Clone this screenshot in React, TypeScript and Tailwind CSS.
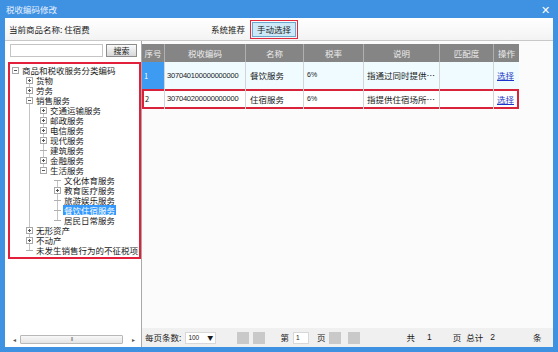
type Node = { label: string; level: number; icon: "plus" | "minus" | "leaf" | "none"; selected?: boolean };

const tree: Node[] = [
  { label: "商品和税收服务分类编码", level: 0, icon: "minus" },
  { label: "货物", level: 1, icon: "plus" },
  { label: "劳务", level: 1, icon: "plus" },
  { label: "销售服务", level: 1, icon: "minus" },
  { label: "交通运输服务", level: 2, icon: "plus" },
  { label: "邮政服务", level: 2, icon: "plus" },
  { label: "电信服务", level: 2, icon: "plus" },
  { label: "现代服务", level: 2, icon: "plus" },
  { label: "建筑服务", level: 2, icon: "leaf" },
  { label: "金融服务", level: 2, icon: "plus" },
  { label: "生活服务", level: 2, icon: "minus" },
  { label: "文化体育服务", level: 3, icon: "leaf" },
  { label: "教育医疗服务", level: 3, icon: "plus" },
  { label: "旅游娱乐服务", level: 3, icon: "leaf" },
  { label: "餐饮住宿服务", level: 3, icon: "leaf", selected: true },
  { label: "居民日常服务", level: 3, icon: "leaf" },
  { label: "无形资产", level: 1, icon: "plus" },
  { label: "不动产", level: 1, icon: "plus" },
  { label: "未发生销售行为的不征税项目", level: 1, icon: "leaf" },
];

// tree guide lines: [level, first row, last row]
const guides: [number, number, number][] = [
  [1, 1, 18],
  [2, 4, 10],
  [3, 11, 15],
];

const cols = [
  { title: "序号", w: "w-[23px]" },
  { title: "税收编码", w: "w-[81px]" },
  { title: "名称", w: "w-[58px]" },
  { title: "税率", w: "w-[60px]" },
  { title: "说明", w: "w-[76px]" },
  { title: "匹配度", w: "w-[54px]" },
  { title: "操作", w: "w-[25px]" },
];

const rows = [
  { no: "1", code: "307040100000000000", name: "餐饮服务", rate: "6%", desc: "指通过同时提供…" },
  { no: "2", code: "307040200000000000", name: "住宿服务", rate: "6%", desc: "指提供住宿场所…" },
];

function Expander({ icon }: { icon: Node["icon"] }) {
  if (icon === "leaf") {
    return (
      <span className="flex h-[7px] w-[7px] shrink-0 items-center">
        <span className="h-px w-[7px] bg-[#b0b0b0]" />
      </span>
    );
  }
  if (icon === "none") return <span className="w-[7px] shrink-0" />;
  return (
    <span className="relative z-10 flex h-[7px] w-[7px] shrink-0 items-center justify-center border border-[#a8a8a8] bg-white">
      <span className="absolute h-px w-[3px] bg-[#555]" />
      {icon === "plus" && <span className="absolute h-[3px] w-px bg-[#555]" />}
    </span>
  );
}

export default function App() {
  return (
    <div
      className="flex h-[352px] w-[558px] flex-col overflow-hidden bg-[#3f91e2] text-[#1a1a1a]"
      style={{ fontFamily: '"Noto Sans CJK SC", "Liberation Sans", sans-serif' }}
    >
      {/* title bar */}
      <div className="flex h-[18px] shrink-0 items-center justify-between pl-[6px] pr-[8px] text-[8.5px] text-[#e8f2ff]">
        <span>税收编码修改</span>
        <span className="text-[11px] leading-none text-white">✕</span>
      </div>

      <div className="mx-[5px] mb-[5px] flex min-h-0 flex-1 flex-col bg-white">
        {/* product row */}
        <div className="flex h-[23px] shrink-0 items-center border-b border-[#c8c8c8] bg-gradient-to-b from-white to-[#f3f3f3] pl-[4px] text-[8.5px]">
          <span className="w-[202px]">当前商品名称: 住宿费</span>
          <span>系统推荐</span>
          <span className="ml-[5px] border border-[#e0283f] p-px">
            <span className="block border border-[#6aa8cc] bg-[#cde9f7] px-[4px] py-px leading-[11px]">手动选择</span>
          </span>
        </div>

        <div className="flex min-h-0 flex-1">
          {/* left panel */}
          <div className="flex w-[137px] shrink-0 flex-col border-r border-[#a9a9a9] bg-white">
            <div className="mt-[3px] flex h-[13px] items-center pl-[5px] pr-[4px]">
              <div className="h-[13px] flex-1 border border-[#c4c4c4] bg-white" />
              <div className="ml-[3px] flex h-[13px] w-[31px] items-center justify-center border border-[#8c8c8c] bg-gradient-to-b from-[#fafafa] to-[#d8d8d8] text-[8px]">
                搜索
              </div>
            </div>
            <div className="ml-[3px] mt-[5px] h-[197px] w-[133px] overflow-hidden border-2 border-[#e2203c] bg-white pt-px">
              <div className="relative">
                {guides.map(([lvl, a, b]) => (
                  <span
                    key={lvl}
                    className="absolute w-px bg-[#c4c4c4]"
                    style={{ left: 5 + lvl * 14, top: a * 10 + 5, height: (b - a) * 10 }}
                  />
                ))}
                {tree.map((n) => (
                  <div
                    key={n.label}
                    className="relative flex h-[10px] items-center gap-[2px] whitespace-nowrap text-[8.5px] leading-[10px]"
                    style={{ paddingLeft: 2 + n.level * 14 }}
                  >
                    <Expander icon={n.icon} />
                    <span className={n.selected ? "bg-[#3399ff] px-px text-white" : "px-px"}>{n.label}</span>
                  </div>
                ))}
              </div>
            </div>
            <div className="flex-1" />
            <div className="mb-[3px] flex h-[10px] items-center px-[3px] text-[6px] text-[#555]">
              <span className="w-[12px] text-center">◂</span>
              <div className="flex h-[9px] w-[103px] items-center justify-center rounded-[1px] border border-[#b8b8b8] bg-gradient-to-b from-[#f8f8f8] to-[#e4e4e4] text-[5px] tracking-[-1px] text-[#777]">
                III
              </div>
              <div className="flex-1" />
              <span className="w-[10px] text-center">▸</span>
            </div>
          </div>

          {/* right panel */}
          <div className="flex min-w-0 flex-1 flex-col bg-[#fbfbfb]">
            <div className="mt-[3px] w-[377px]">
              <div className="flex h-[18px] bg-[#858585] text-[8.5px] text-[#ececec]">
                {cols.map((c, i) => (
                  <div
                    key={c.title}
                    className={`${c.w} flex items-center justify-center ${i < cols.length - 1 ? "border-r border-[#b0b0b0]" : ""}`}
                  >
                    {c.title}
                  </div>
                ))}
              </div>
              {rows.map((r, ri) => (
                <div
                  key={r.no}
                  className={
                    ri === 0
                      ? "flex h-[27px] bg-[#effbff] text-[8.5px]"
                      : "flex h-[20px] bg-white text-[8.5px] ring-2 ring-inset ring-[#d8233b]"
                  }
                >
                  <div
                    className={`${cols[0].w} flex items-center border-r border-[#d4d4d4] pl-[2px] text-[7.5px] ${
                      ri === 0 ? "bg-[#3d9bf2] text-white" : "pl-[3px]"
                    }`}
                  >
                    {r.no}
                  </div>
                  <div
                    className={`${cols[1].w} flex items-center border-r border-[#d4d4d4] pl-[2px] text-[7.5px] tracking-[-0.2px]`}
                    style={{ fontFamily: '"Liberation Sans", sans-serif' }}
                  >
                    {r.code}
                  </div>
                  <div className={`${cols[2].w} flex items-center border-r border-[#d4d4d4] pl-[4px]`}>{r.name}</div>
                  <div
                    className={`${cols[3].w} flex items-center border-r border-[#d4d4d4] pl-[3px] text-[7px]`}
                    style={{ fontFamily: '"Liberation Sans", sans-serif' }}
                  >
                    {r.rate}
                  </div>
                  <div className={`${cols[4].w} flex items-center border-r border-[#d4d4d4] pl-[3px] whitespace-nowrap`}>
                    {r.desc}
                  </div>
                  <div className={`${cols[5].w} border-r border-[#d4d4d4]`} />
                  <div className={`${cols[6].w} flex items-center pl-[3px] text-[#1c35c8] underline`}>选择</div>
                </div>
              ))}
            </div>

            <div className="flex-1" />

            {/* pager */}
            <div className="flex h-[19px] shrink-0 items-center bg-[#f0f0f0] pl-[3px] text-[8.5px]">
              <span>每页条数:</span>
              <div className="ml-[4px] flex h-[12px] w-[31px] items-center justify-between border border-[#d8d8d8] bg-white px-[2px] text-[6.5px]">
                <span style={{ fontFamily: '"Liberation Sans", sans-serif' }}>100</span>
                <span className="text-[6px]">▼</span>
              </div>
              <span className="ml-[21px] h-[12px] w-[12px] bg-[#c9c9c9]" />
              <span className="ml-[4px] h-[12px] w-[12px] bg-[#c9c9c9]" />
              <span className="ml-[15px]">第</span>
              <div
                className="ml-[4px] h-[12px] w-[16px] border border-[#d8d8d8] bg-white pl-[2px] text-[6.5px] leading-[10px]"
                style={{ fontFamily: '"Liberation Sans", sans-serif' }}
              >
                1
              </div>
              <span className="ml-[8px]">页</span>
              <span className="ml-[4px] h-[12px] w-[12px] bg-[#c9c9c9]" />
              <span className="ml-[7px] h-[12px] w-[12px] bg-[#c9c9c9]" />
              <span className="ml-[46px]">共</span>
              <span className="ml-[12px]" style={{ fontFamily: '"Liberation Sans", sans-serif' }}>1</span>
              <span className="ml-[21px]">页</span>
              <span className="ml-[5px]">总计</span>
              <span className="ml-[7px]" style={{ fontFamily: '"Liberation Sans", sans-serif' }}>2</span>
              <span className="ml-[38px]">条</span>
            </div>
          </div>
        </div>
      </div>
    </div>
  );
}
